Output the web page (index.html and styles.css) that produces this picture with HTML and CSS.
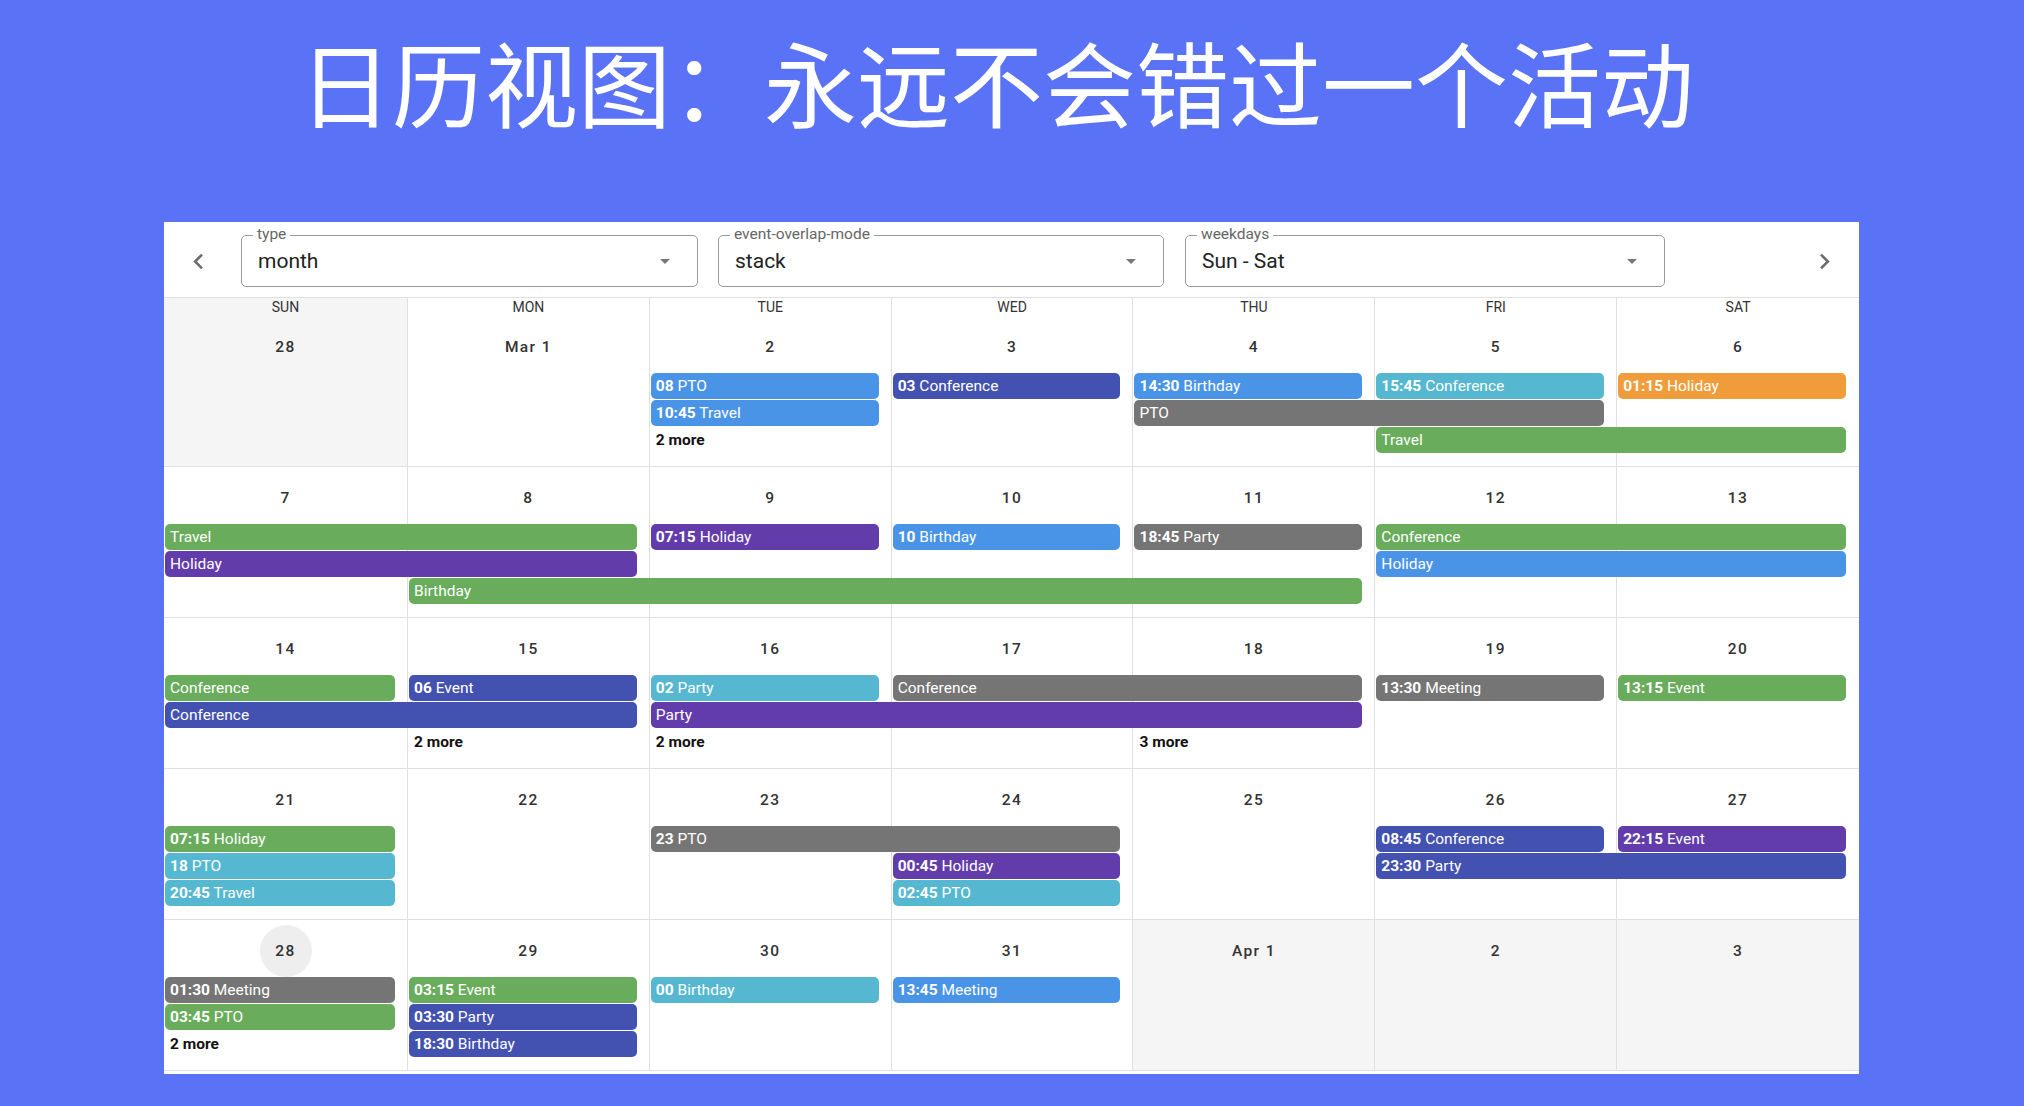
FILE: index.html
```html
<!DOCTYPE html>
<html>
  <head>
    <link rel="stylesheet" href="styles.css">
  </head>

  <body>
    <div class="headline">日历视图：永远不会错过一个活动</div>

    <div class="sheet">
      <div class="toolbar">
        <button class="navbtn prev">
          <svg viewBox="0 0 24 24"><path d="M15.41,16.58L10.83,12L15.41,7.41L14,6L8,12L14,18L15.41,16.58Z"/></svg>
        </button>

        <div class="select sel-type">
          <span class="select-label">type</span>
          <span class="select-value">month</span>
          <svg class="caret" viewBox="0 0 24 24"><path d="M7,10L12,15L17,10H7Z"/></svg>
        </div>

        <div class="select sel-mode">
          <span class="select-label">event-overlap-mode</span>
          <span class="select-value">stack</span>
          <svg class="caret" viewBox="0 0 24 24"><path d="M7,10L12,15L17,10H7Z"/></svg>
        </div>

        <div class="select sel-days">
          <span class="select-label">weekdays</span>
          <span class="select-value">Sun - Sat</span>
          <svg class="caret" viewBox="0 0 24 24"><path d="M7,10L12,15L17,10H7Z"/></svg>
        </div>

        <div class="spacer"></div>

        <button class="navbtn next">
          <svg viewBox="0 0 24 24"><path d="M8.59,16.58L13.17,12L8.59,7.41L10,6L16,12L10,18L8.59,16.58Z"/></svg>
        </button>
      </div>

      <div class="calendar">
        <div class="weekhead">
          <div class="headday outside">SUN</div>
          <div class="headday">MON</div>
          <div class="headday">TUE</div>
          <div class="headday">WED</div>
          <div class="headday">THU</div>
          <div class="headday">FRI</div>
          <div class="headday">SAT</div>
        </div>

        <!-- week 1 -->
        <div class="week">
          <div class="day outside"><span class="daylabel">28</span></div>
          <div class="day"><span class="daylabel">Mar 1</span></div>
          <div class="day"><span class="daylabel">2</span></div>
          <div class="day"><span class="daylabel">3</span></div>
          <div class="day"><span class="daylabel">4</span></div>
          <div class="day"><span class="daylabel">5</span></div>
          <div class="day"><span class="daylabel">6</span></div>

          <div class="ev blue c3 r1"><strong>08</strong> PTO</div>
          <div class="ev indigo c4 r1"><strong>03</strong> Conference</div>
          <div class="ev blue c5 r1"><strong>14:30</strong> Birthday</div>
          <div class="ev cyan c6 r1"><strong>15:45</strong> Conference</div>
          <div class="ev orange c7 r1"><strong>01:15</strong> Holiday</div>
          <div class="ev blue c3 r2"><strong>10:45</strong> Travel</div>
          <div class="ev grey c5 s2 r2">PTO</div>
          <div class="more c3 r3">2 more</div>
          <div class="ev green c6 s2 r3">Travel</div>
        </div>

        <!-- week 2 -->
        <div class="week">
          <div class="day"><span class="daylabel">7</span></div>
          <div class="day"><span class="daylabel">8</span></div>
          <div class="day"><span class="daylabel">9</span></div>
          <div class="day"><span class="daylabel">10</span></div>
          <div class="day"><span class="daylabel">11</span></div>
          <div class="day"><span class="daylabel">12</span></div>
          <div class="day"><span class="daylabel">13</span></div>

          <div class="ev green c1 s2 r1">Travel</div>
          <div class="ev purple c3 r1"><strong>07:15</strong> Holiday</div>
          <div class="ev blue c4 r1"><strong>10</strong> Birthday</div>
          <div class="ev grey c5 r1"><strong>18:45</strong> Party</div>
          <div class="ev green c6 s2 r1">Conference</div>
          <div class="ev purple c1 s2 r2">Holiday</div>
          <div class="ev blue c6 s2 r2">Holiday</div>
          <div class="ev green c2 s4 r3">Birthday</div>
        </div>

        <!-- week 3 -->
        <div class="week">
          <div class="day"><span class="daylabel">14</span></div>
          <div class="day"><span class="daylabel">15</span></div>
          <div class="day"><span class="daylabel">16</span></div>
          <div class="day"><span class="daylabel">17</span></div>
          <div class="day"><span class="daylabel">18</span></div>
          <div class="day"><span class="daylabel">19</span></div>
          <div class="day"><span class="daylabel">20</span></div>

          <div class="ev green c1 r1">Conference</div>
          <div class="ev indigo c2 r1"><strong>06</strong> Event</div>
          <div class="ev cyan c3 r1"><strong>02</strong> Party</div>
          <div class="ev grey c4 s2 r1">Conference</div>
          <div class="ev grey c6 r1"><strong>13:30</strong> Meeting</div>
          <div class="ev green c7 r1"><strong>13:15</strong> Event</div>
          <div class="ev indigo c1 s2 r2">Conference</div>
          <div class="ev purple c3 s3 r2">Party</div>
          <div class="more c2 r3">2 more</div>
          <div class="more c3 r3">2 more</div>
          <div class="more c5 r3">3 more</div>
        </div>

        <!-- week 4 -->
        <div class="week">
          <div class="day"><span class="daylabel">21</span></div>
          <div class="day"><span class="daylabel">22</span></div>
          <div class="day"><span class="daylabel">23</span></div>
          <div class="day"><span class="daylabel">24</span></div>
          <div class="day"><span class="daylabel">25</span></div>
          <div class="day"><span class="daylabel">26</span></div>
          <div class="day"><span class="daylabel">27</span></div>

          <div class="ev green c1 r1"><strong>07:15</strong> Holiday</div>
          <div class="ev grey c3 s2 r1"><strong>23</strong> PTO</div>
          <div class="ev indigo c6 r1"><strong>08:45</strong> Conference</div>
          <div class="ev purple c7 r1"><strong>22:15</strong> Event</div>
          <div class="ev cyan c1 r2"><strong>18</strong> PTO</div>
          <div class="ev purple c4 r2"><strong>00:45</strong> Holiday</div>
          <div class="ev indigo c6 s2 r2"><strong>23:30</strong> Party</div>
          <div class="ev cyan c1 r3"><strong>20:45</strong> Travel</div>
          <div class="ev cyan c4 r3"><strong>02:45</strong> PTO</div>
        </div>

        <!-- week 5 -->
        <div class="week">
          <div class="day"><span class="daylabel hovered">28</span></div>
          <div class="day"><span class="daylabel">29</span></div>
          <div class="day"><span class="daylabel">30</span></div>
          <div class="day"><span class="daylabel">31</span></div>
          <div class="day outside"><span class="daylabel">Apr 1</span></div>
          <div class="day outside"><span class="daylabel">2</span></div>
          <div class="day outside"><span class="daylabel">3</span></div>

          <div class="ev grey c1 r1"><strong>01:30</strong> Meeting</div>
          <div class="ev green c2 r1"><strong>03:15</strong> Event</div>
          <div class="ev cyan c3 r1"><strong>00</strong> Birthday</div>
          <div class="ev blue c4 r1"><strong>13:45</strong> Meeting</div>
          <div class="ev green c1 r2"><strong>03:45</strong> PTO</div>
          <div class="ev indigo c2 r2"><strong>03:30</strong> Party</div>
          <div class="more c1 r3">2 more</div>
          <div class="ev indigo c2 r3"><strong>18:30</strong> Birthday</div>
        </div>
      </div>
    </div>
  </body>
</html>
```

FILE: styles.css
```css
body {
  margin: 0;
  background-color: #5a72f5;
  font-family: Roboto, "Liberation Sans", sans-serif;
}

.headline {
  height: 222px;
  box-sizing: border-box;
  padding: 34px 31px 0 0;
  color: white;
  font-family: "Noto Sans CJK SC", "Noto Sans", sans-serif;
  font-size: 93px;
  line-height: 1;
  font-weight: 400;
  text-align: center;
}

.sheet {
  margin: 0 165px 0 164px;
  background-color: white;
  padding-bottom: 3px;
}

/* toolbar */

.toolbar {
  display: flex;
  align-items: center;
  height: 75px;
  box-sizing: border-box;
  padding: 13px 0 10px;
}

.navbtn {
  width: 52px;
  height: 52px;
  border: none;
  background: transparent;
  padding: 0;
  display: flex;
  align-items: center;
  justify-content: center;
}

.navbtn svg {
  width: 31px;
  height: 31px;
  fill: #6b6b6b;
}

.prev {
  margin: 0 17px 0 8px;
}

.next {
  margin-right: 9px;
}

.select {
  position: relative;
  height: 52px;
  box-sizing: border-box;
  border: 1px solid #9a9a9a;
  border-radius: 5px;
  display: flex;
  align-items: center;
  padding-left: 16px;
}

.sel-type {
  width: 457px;
  margin-right: 20px;
}

.sel-mode {
  width: 446px;
  margin-right: 21px;
}

.sel-days {
  width: 480px;
}

.select-label {
  position: absolute;
  top: -9px;
  left: 11px;
  padding: 0 4px;
  background-color: white;
  color: #666;
  font-size: 15.5px;
  line-height: 1;
}

.select-value {
  font-size: 21px;
  color: #222;
}

.caret {
  width: 24px;
  height: 24px;
  margin-left: auto;
  margin-right: 20px;
  fill: #777;
}

.spacer {
  flex: 1;
}

/* calendar */

.calendar {
  border-top: 1px solid #e0e0e0;
}

.weekhead {
  display: grid;
  grid-template-columns: 244px repeat(6, 1fr);
  height: 18px;
}

.headday {
  border-right: 1px solid #e0e0e0;
  font-size: 14px;
  line-height: 18px;
  text-align: center;
  color: #333;
}

.headday:last-child,
.day:nth-child(7) {
  border-right: none;
}

.outside {
  background-color: #f5f5f5;
}

.week {
  display: grid;
  grid-template-columns: 244px repeat(6, 1fr);
  grid-template-rows: 57px 27px 27px 27px 1fr;
  height: 151px;
}

.day {
  grid-row: 1 / -1;
  border-right: 1px solid #e0e0e0;
  border-bottom: 1px solid #e0e0e0;
  display: flex;
  justify-content: center;
  align-items: flex-start;
}

.day:nth-child(1) { grid-column: 1; }
.day:nth-child(2) { grid-column: 2; }
.day:nth-child(3) { grid-column: 3; }
.day:nth-child(4) { grid-column: 4; }
.day:nth-child(5) { grid-column: 5; }
.day:nth-child(6) { grid-column: 6; }
.day:nth-child(7) { grid-column: 7; }

.daylabel {
  margin-top: 5px;
  min-width: 52px;
  height: 52px;
  border-radius: 26px;
  display: flex;
  align-items: center;
  justify-content: center;
  font-size: 15.5px;
  font-weight: 500;
  letter-spacing: 0.09em;
  color: #333;
}

.hovered {
  background-color: #eeeeee;
}

.ev {
  height: 26px;
  margin: 0 13px 1px 1px;
  border-radius: 5px;
  padding-left: 5px;
  color: white;
  font-size: 15.5px;
  line-height: 26px;
  white-space: nowrap;
  overflow: hidden;
}

.ev strong {
  font-weight: 700;
}

.more {
  height: 26px;
  padding-left: 6px;
  font-size: 15.5px;
  line-height: 26px;
  font-weight: 700;
  color: #111;
}

.c1 { grid-column-start: 1; }
.c2 { grid-column-start: 2; }
.c3 { grid-column-start: 3; }
.c4 { grid-column-start: 4; }
.c5 { grid-column-start: 5; }
.c6 { grid-column-start: 6; }
.c7 { grid-column-start: 7; }

.s2 { grid-column-end: span 2; }
.s3 { grid-column-end: span 3; }
.s4 { grid-column-end: span 4; }

.r1 { grid-row: 2; }
.r2 { grid-row: 3; }
.r3 { grid-row: 4; }

.blue { background-color: #4a94e8; }
.indigo { background-color: #4351b0; }
.purple { background-color: #623cab; }
.cyan { background-color: #55b8d0; }
.green { background-color: #68ac5c; }
.orange { background-color: #f09c3a; }
.grey { background-color: #757575; }
```
